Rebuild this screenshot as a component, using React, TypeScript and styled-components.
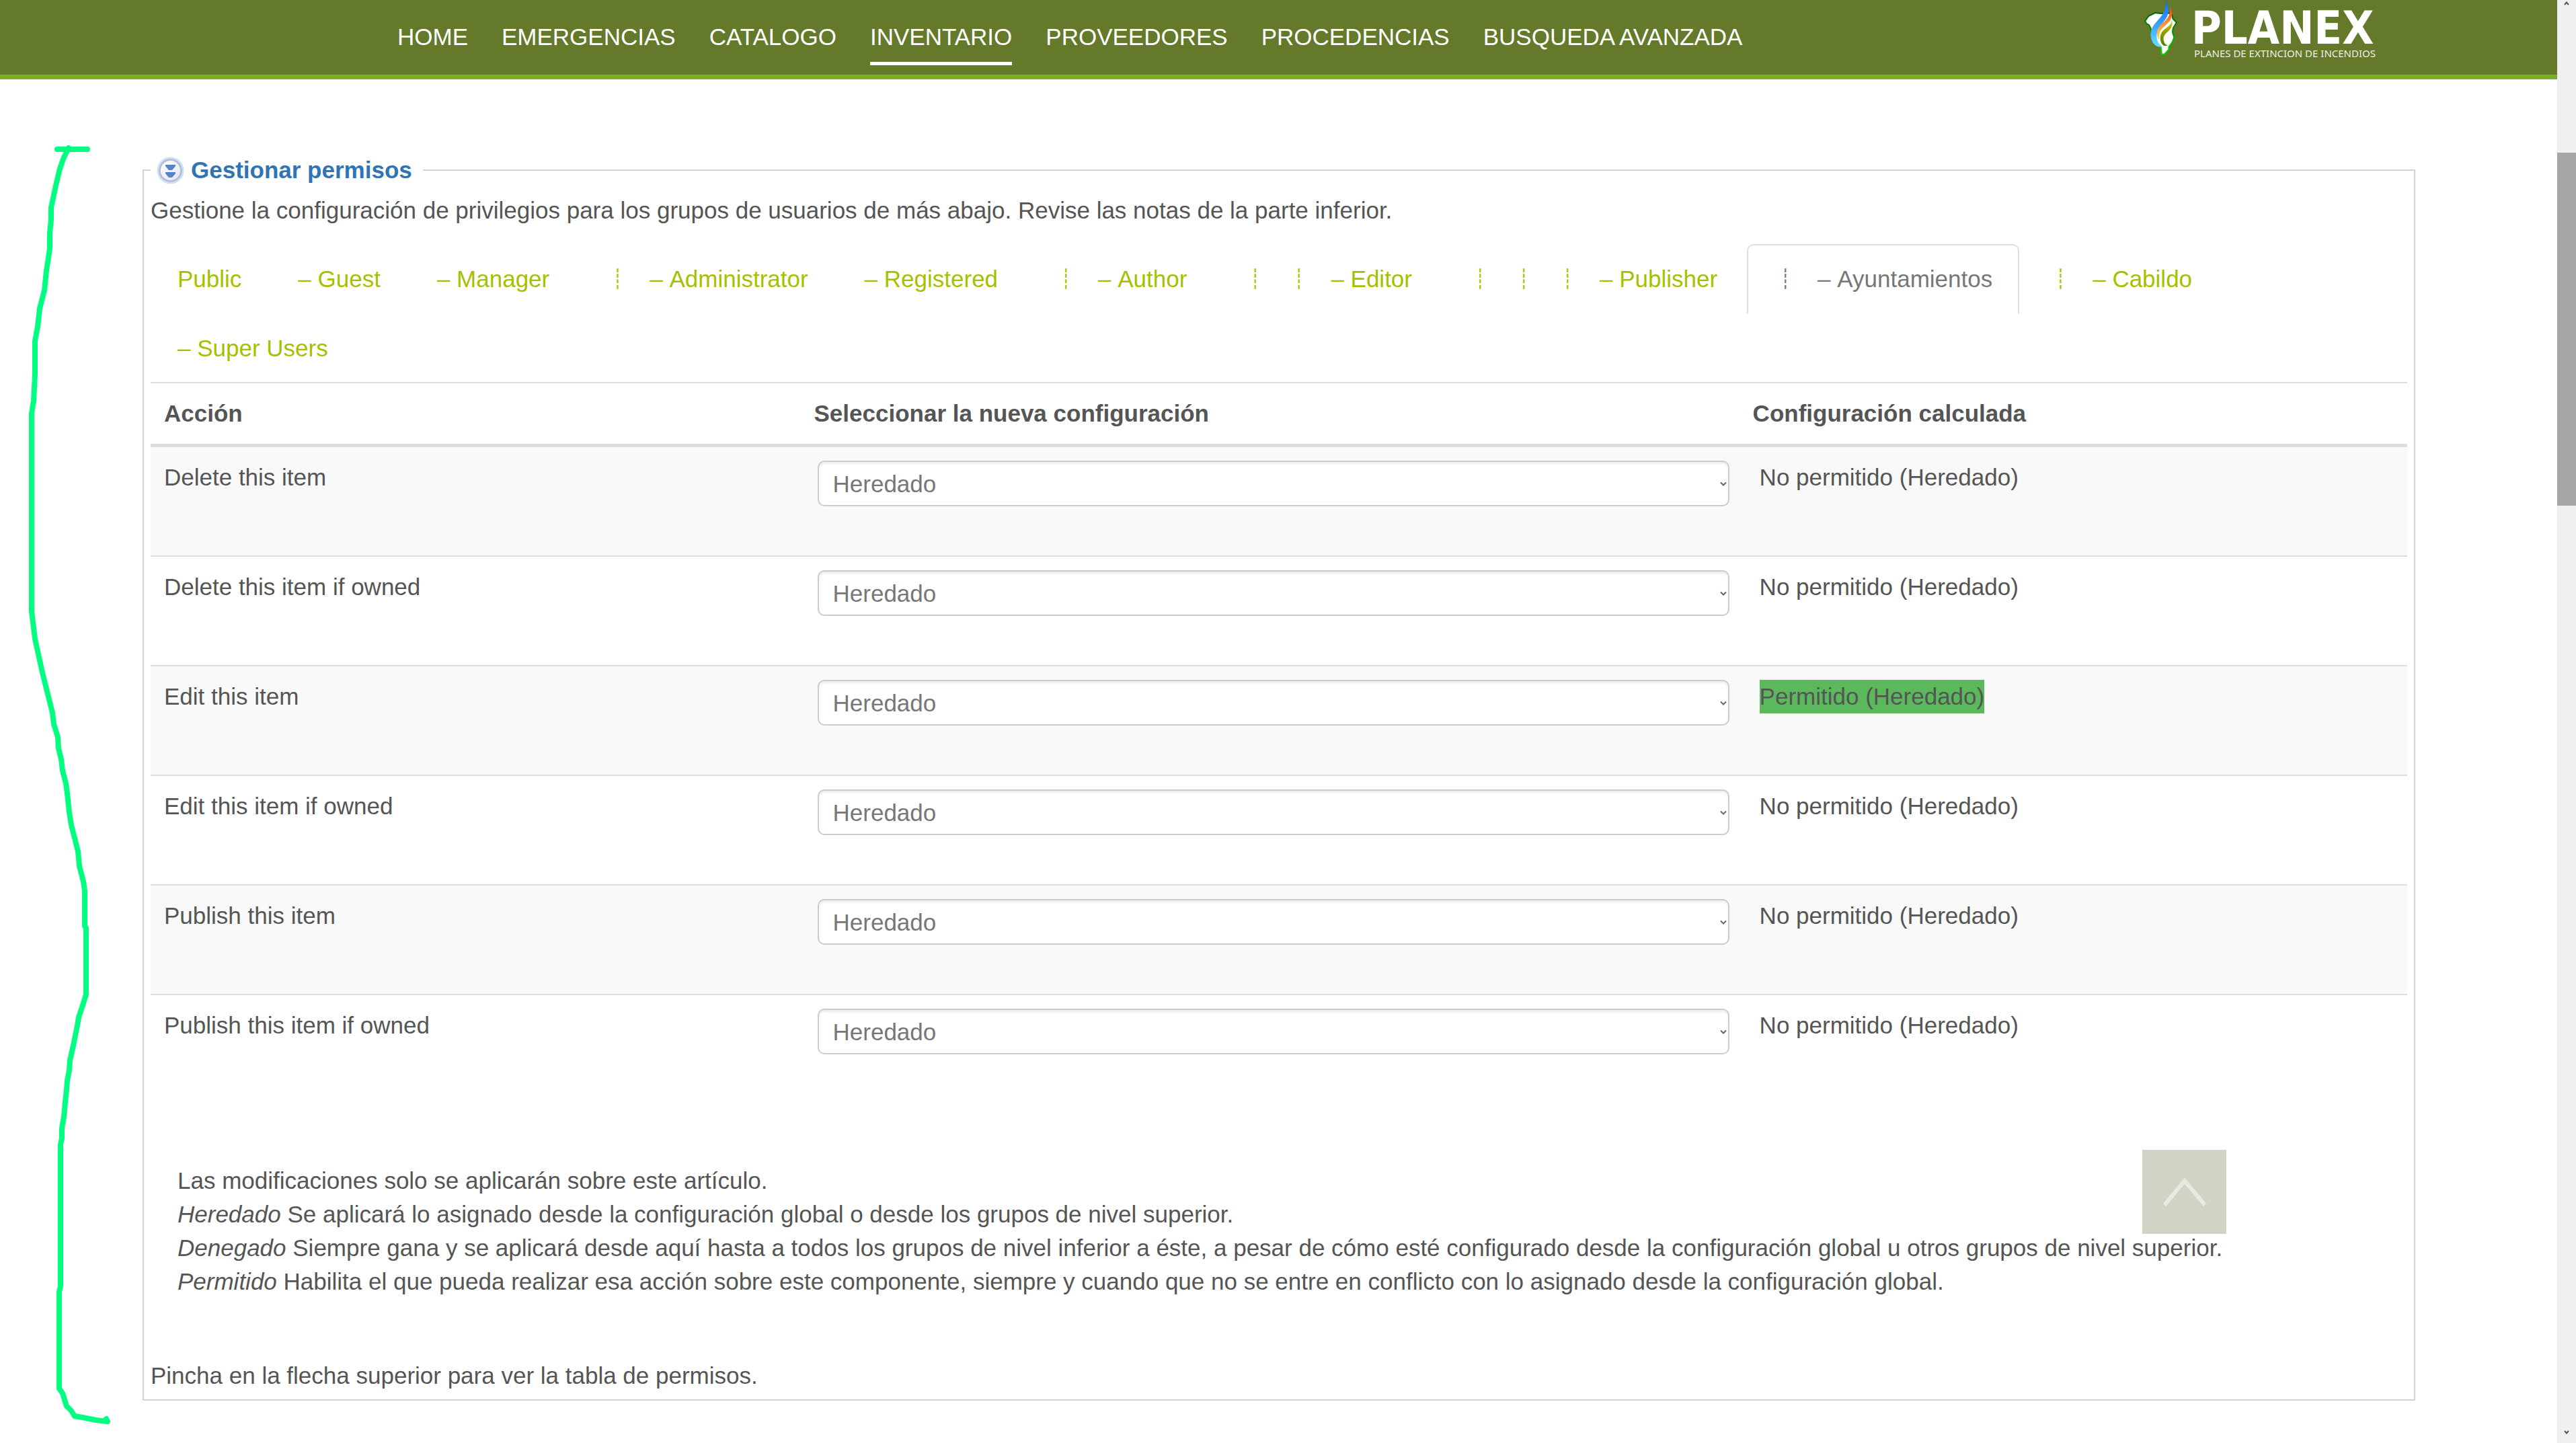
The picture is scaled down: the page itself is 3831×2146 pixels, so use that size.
import React, { useState } from "react";
import styled, { createGlobalStyle } from "styled-components";

const GlobalStyle = createGlobalStyle`
  *, *::before, *::after { box-sizing: border-box; }
  html, body { margin: 0; padding: 0; background: #fff; }
  body {
    font-family: "Liberation Sans", Arial, Helvetica, sans-serif;
    font-size: 35px;
    line-height: 50px;
    color: #555;
  }
`;

const Shell = styled.div`
  display: grid;
  grid-template-columns: minmax(0, 1fr) 28px;
  min-height: 100vh;
`;

const Page = styled.div`
  position: relative;
  min-width: 0;
`;

const Header = styled.header`
  display: flex;
  justify-content: space-between;
  align-items: flex-start;
  height: 118px;
  padding: 0 270px 0 591px;
  background: #64792a;
  border-bottom: 7px solid #7dad24;
`;

const Nav = styled.nav`
  display: flex;
  gap: 50px;
  padding-top: 30px;
`;

const NavLink = styled.a<{ $active?: boolean }>`
  padding-bottom: 12px;
  border-bottom: 5px solid ${(p) => (p.$active ? "#fff" : "transparent")};
  color: #fff;
  text-decoration: none;
  white-space: nowrap;
`;

const Brand = styled.a`
  display: flex;
  align-items: flex-start;
  gap: 20px;
  color: #fff;
  text-decoration: none;
`;

const BrandText = styled.span`
  display: flex;
  flex-direction: column;
  padding-top: 13px;
`;

const BrandName = styled.span`
  font: 700 68px/58px "DejaVu Sans Condensed", Lato, sans-serif;
`;

const BrandTagline = styled.span`
  padding-left: 4px;
  font: 400 15px/16px "Noto Sans", sans-serif;
  color: #eef0e6;
  white-space: nowrap;
`;

const Main = styled.main`
  padding: 110px 211px 63px 212px;
`;

const Panel = styled.fieldset`
  min-width: 0;
  margin: 0;
  padding: 10px;
  border: 2px solid #d3d3d3;
`;

const PanelLegend = styled.legend`
  padding: 0 16px 0 9px;
  font-weight: bold;
`;

const LegendLink = styled.a`
  display: flex;
  align-items: center;
  gap: 10px;
  color: #2f75b5;
  text-decoration: none;
`;

const Intro = styled.p`
  margin: 0 0 25px;
`;

const Tabs = styled.div`
  display: flex;
  flex-wrap: wrap;
  column-gap: 4px;
  row-gap: 1px;
  border-bottom: 2px solid #ddd;
`;

const Tab = styled.button<{ $active?: boolean }>`
  display: flex;
  height: 104px;
  margin: 0 0 -2px;
  padding: 25px 38px;
  border: 2px solid ${(p) => (p.$active ? "#ddd" : "transparent")};
  border-bottom-color: ${(p) => (p.$active ? "#fff" : "transparent")};
  border-radius: 10px 10px 0 0;
  background: ${(p) => (p.$active ? "#fff" : "transparent")};
  color: ${(p) => (p.$active ? "#777" : "#a8bf00")};
  font: inherit;
  white-space: nowrap;
  cursor: pointer;
`;

const LevelMark = styled.span`
  width: 65px;
  padding-left: 9px;
  font-family: "DejaVu Sans", sans-serif;
  font-size: 28px;
  text-align: left;
`;

const Table = styled.table`
  width: 100%;
  margin-bottom: 90px;
  border-spacing: 0;
  table-layout: fixed;

  th, td {
    padding: 20px;
    text-align: left;
    vertical-align: top;
  }
  th { border-bottom: 5px solid #ddd; }
  tbody tr:nth-child(odd) { background: #f9f9f9; }
  tbody tr + tr > td { border-top: 2px solid #ddd; }
`;

const ActionCol = styled.col`width: 28.8%;`;
const SettingCol = styled.col`width: 41.6%;`;

const SelectBox = styled.div`
  position: relative;
  width: 100%;
  height: 68px;
  margin: 0 0 53px 5px;
`;

const Select = styled.select`
  display: block;
  width: 100%;
  height: 68px;
  padding: 2px 21px 0;
  appearance: none;
  border: 2px solid #ccc;
  border-radius: 10px;
  background: #fff;
  box-shadow: inset 0 3px 3px rgba(0, 0, 0, 0.075);
  color: #777;
  font: inherit;
`;

const SelectArrow = styled.svg`
  position: absolute;
  right: 4px;
  top: 31px;
  pointer-events: none;
`;

const Result = styled.span<{ $allowed?: boolean }>`
  display: inline-block;
  margin-left: 10px;
  background: ${(p) => (p.$allowed ? "#5cb85c" : "transparent")};
`;

const Notes = styled.p`
  margin: 0 0 90px;
  padding: 0 40px;
`;

const Hint = styled.p`
  margin: 0;
`;

const ToTop = styled.button`
  position: absolute;
  right: 492px;
  bottom: 311px;
  display: grid;
  place-items: center;
  width: 125px;
  height: 125px;
  padding: 0;
  border: 0;
  background: #d0d4c5;
`;

const Annotation = styled.svg`
  position: absolute;
  left: 0;
  top: 0;
  pointer-events: none;
`;

const Scrollbar = styled.div`
  display: flex;
  flex-direction: column;
  align-items: center;
  height: 100vh;
  padding-top: 2px;
  padding-bottom: 13px;
  background: #f0f0f0;
`;

const Track = styled.div`
  flex: 1;
  width: 100%;
  padding-top: 219px;
`;

const Thumb = styled.div`
  width: 100%;
  height: 525px;
  background: #a6a6a6;
`;

const navItems = [
  "HOME",
  "EMERGENCIAS",
  "CATALOGO",
  "INVENTARIO",
  "PROVEEDORES",
  "PROCEDENCIAS",
  "BUSQUEDA AVANZADA",
];

const groups = [
  { name: "Public", level: 0 },
  { name: "Guest", level: 1 },
  { name: "Manager", level: 1 },
  { name: "Administrator", level: 2 },
  { name: "Registered", level: 1 },
  { name: "Author", level: 2 },
  { name: "Editor", level: 3 },
  { name: "Publisher", level: 4 },
  { name: "Ayuntamientos", level: 2 },
  { name: "Cabildo", level: 2 },
  { name: "Super Users", level: 1 },
];

const actions = [
  { name: "Delete this item", allowed: false },
  { name: "Delete this item if owned", allowed: false },
  { name: "Edit this item", allowed: true },
  { name: "Edit this item if owned", allowed: false },
  { name: "Publish this item", allowed: false },
  { name: "Publish this item if owned", allowed: false },
];

function FlameLogo() {
  return (
    <svg width="51" height="83" viewBox="22 4 152 248" aria-hidden="true">
      <defs>
        <linearGradient id="island" x1="0" y1="0" x2="0" y2="1">
          <stop offset="0" stopColor="#006400" />
          <stop offset="0.5" stopColor="#009600" />
          <stop offset="1" stopColor="#00e000" />
        </linearGradient>
        <linearGradient id="blue" x1="0" y1="0" x2="0" y2="1">
          <stop offset="0" stopColor="#0a6cf5" />
          <stop offset="0.45" stopColor="#3399ff" />
          <stop offset="1" stopColor="#66e0ff" />
        </linearGradient>
        <linearGradient id="orange" x1="0" y1="0" x2="0" y2="1">
          <stop offset="0" stopColor="#ff3c00" />
          <stop offset="0.5" stopColor="#ff8c2e" />
          <stop offset="1" stopColor="#ffe04a" />
        </linearGradient>
        <linearGradient id="olive" x1="0" y1="0" x2="0" y2="1">
          <stop offset="0" stopColor="#d2c800" />
          <stop offset="0.5" stopColor="#8f9c00" />
          <stop offset="1" stopColor="#4c8000" />
        </linearGradient>
      </defs>
      <path
        d="M28 98 L43 76 L73 61 L98 64 L136 62 L147 69 L152 88 L168 104 L153 128 L150 146 L157 170 L150 190 L134 212 L133 224 L114 245 L102 244 L98 211 L70 185 L56 160 L54 131 L45 114 L36 110 Z"
        fill="#fff"
        stroke="url(#island)"
        strokeWidth="6"
        strokeLinejoin="round"
      />
      <path
        d="M121 5 C134 28 136 54 126 77 C112 108 80 124 80 160 C79 184 88 200 102 212 C76 214 58 196 54 168 C48 126 78 105 96 82 C115 58 123 36 121 5 Z"
        fill="url(#blue)"
      />
      <path
        d="M139 32 C149 50 151 72 142 89 C130 113 98 128 93 150 C90 162 91 172 90 181 C79 165 79 146 87 130 C98 109 124 97 134 73 C139 60 140 48 139 32 Z"
        fill="url(#orange)"
      />
      <path
        d="M147 94 C154 119 140 136 127 147 C113 158 107 172 112 188 C115 199 121 204 129 206 C112 213 98 200 96 180 C93 151 108 138 124 127 C139 117 146 109 147 94 Z"
        fill="url(#olive)"
      />
    </svg>
  );
}

function ExpandIcon() {
  return (
    <svg width="41" height="41" viewBox="0 0 41 41" aria-hidden="true">
      <defs>
        <linearGradient id="disc" x1="0" y1="0" x2="1" y2="1">
          <stop offset="0" stopColor="#ffffff" />
          <stop offset="1" stopColor="#dfe6f2" />
        </linearGradient>
      </defs>
      <circle cx="20.5" cy="20.5" r="20" fill="#cfe1f9" />
      <circle cx="20.5" cy="20.5" r="16" fill="url(#disc)" stroke="#b4c0d4" strokeWidth="3" />
      <path d="M13 12h15v2l-5 6h-5l-5-6z" fill="#5583c8" />
      <path d="M13 23h15v2l-5 6h-5l-5-6z" fill="#5583c8" />
    </svg>
  );
}

function Bracket() {
  return (
    <Annotation width="180" height="2146" viewBox="0 0 180 2146" aria-hidden="true">
      <g fill="none" stroke="#00ff80" strokeLinejoin="round" strokeLinecap="round">
        <path strokeWidth="8" d="M85 222H130" />
        <path
          strokeWidth="8"
          d="M102 220 95 234 89 251 83 276 76 309V327L74 347V370L69 403 66 432 59 459 56 486 52 507V556L51 577 50 596 47 615V909L52 950 63 1000 78 1060 80 1077 86 1096 87 1113 91 1129 93 1146 98 1165 100 1180 103 1208 106 1227 116 1266 118 1288 124 1311 126 1325V1377L128 1380V1479L123 1495 117 1513 115 1525 109 1555 104 1577 103 1592 100 1607 99 1621 97 1639 95 1661 92 1678V1693L90 1702V1913L88 1921V2065L93 2072 99 2091 106 2098 111 2106"
        />
        <path strokeWidth="8" d="M111 2106 123 2108 143 2112 160 2114 158 2110" />
      </g>
    </Annotation>
  );
}

export default function App() {
  const [current, setCurrent] = useState("Ayuntamientos");

  return (
    <>
      <GlobalStyle />
      <Shell>
        <Page>
          <Header>
            <Nav>
              {navItems.map((item) => (
                <NavLink key={item} href="#" $active={item === "INVENTARIO"}>
                  {item}
                </NavLink>
              ))}
            </Nav>
            <Brand href="#">
              <FlameLogo />
              <BrandText>
                <BrandName>PLANEX</BrandName>
                <BrandTagline>PLANES DE EXTINCION DE INCENDIOS</BrandTagline>
              </BrandText>
            </Brand>
          </Header>

          <Main>
            <Panel>
              <PanelLegend>
                <LegendLink href="#">
                  <ExpandIcon />
                  Gestionar permisos
                </LegendLink>
              </PanelLegend>
              <Intro>
                Gestione la configuración de privilegios para los grupos de usuarios de más abajo.
                Revise las notas de la parte inferior.
              </Intro>

              <Tabs role="tablist">
                {groups.map(({ name, level }) => (
                  <Tab
                    key={name}
                    type="button"
                    role="tab"
                    aria-selected={name === current}
                    $active={name === current}
                    onClick={() => setCurrent(name)}
                  >
                    {Array.from({ length: Math.max(level - 1, 0) }, (_, i) => (
                      <LevelMark key={i}>┊</LevelMark>
                    ))}
                    {level > 0 ? `–\u00a0${name}` : name}
                  </Tab>
                ))}
              </Tabs>

              <Table>
                <colgroup>
                  <ActionCol />
                  <SettingCol />
                  <col />
                </colgroup>
                <thead>
                  <tr>
                    <th scope="col">Acción</th>
                    <th scope="col">Seleccionar la nueva configuración</th>
                    <th scope="col">Configuración calculada</th>
                  </tr>
                </thead>
                <tbody>
                  {actions.map(({ name, allowed }, i) => (
                    <tr key={name}>
                      <td>
                        <label htmlFor={`rule-${i}`}>{name}</label>
                      </td>
                      <td>
                        <SelectBox>
                          <Select id={`rule-${i}`} defaultValue="Heredado">
                            <option>Heredado</option>
                            <option>Permitido</option>
                            <option>Denegado</option>
                          </Select>
                          <SelectArrow width="10" height="8" viewBox="0 0 10 8" aria-hidden="true">
                            <path d="M1 1.5 5 5.5 9 1.5" fill="none" stroke="#666" strokeWidth="2" />
                          </SelectArrow>
                        </SelectBox>
                      </td>
                      <td>
                        <Result $allowed={allowed}>
                          {allowed ? "Permitido (Heredado)" : "No permitido (Heredado)"}
                        </Result>
                      </td>
                    </tr>
                  ))}
                </tbody>
              </Table>

              <Notes>
                Las modificaciones solo se aplicarán sobre este artículo.
                <br />
                <em>Heredado</em> Se aplicará lo asignado desde la configuración global o desde los
                grupos de nivel superior.
                <br />
                <em>Denegado</em> Siempre gana y se aplicará desde aquí hasta a todos los grupos de
                nivel inferior a éste, a pesar de cómo esté configurado desde la configuración global
                u otros grupos de nivel superior.
                <br />
                <em>Permitido</em> Habilita el que pueda realizar esa acción sobre este componente,
                siempre y cuando que no se entre en conflicto con lo asignado desde la configuración
                global.
              </Notes>
              <Hint>Pincha en la flecha superior para ver la tabla de permisos.</Hint>
            </Panel>
          </Main>

          <ToTop type="button" aria-label="Subir">
            <svg width="66" height="46" viewBox="0 0 66 46" aria-hidden="true">
              <path d="M3 42 33 6 63 42" fill="none" stroke="#e8eae2" strokeWidth="6" />
            </svg>
          </ToTop>
          <Bracket />
        </Page>

        <Scrollbar aria-hidden="true">
          <svg width="8" height="6" viewBox="0 0 8 6">
            <path d="M1 5 4 1.5 7 5" fill="none" stroke="#555" strokeWidth="2" />
          </svg>
          <Track>
            <Thumb />
          </Track>
          <svg width="8" height="6" viewBox="0 0 8 6">
            <path d="M1 1 4 4.5 7 1" fill="none" stroke="#555" strokeWidth="2" />
          </svg>
        </Scrollbar>
      </Shell>
    </>
  );
}
